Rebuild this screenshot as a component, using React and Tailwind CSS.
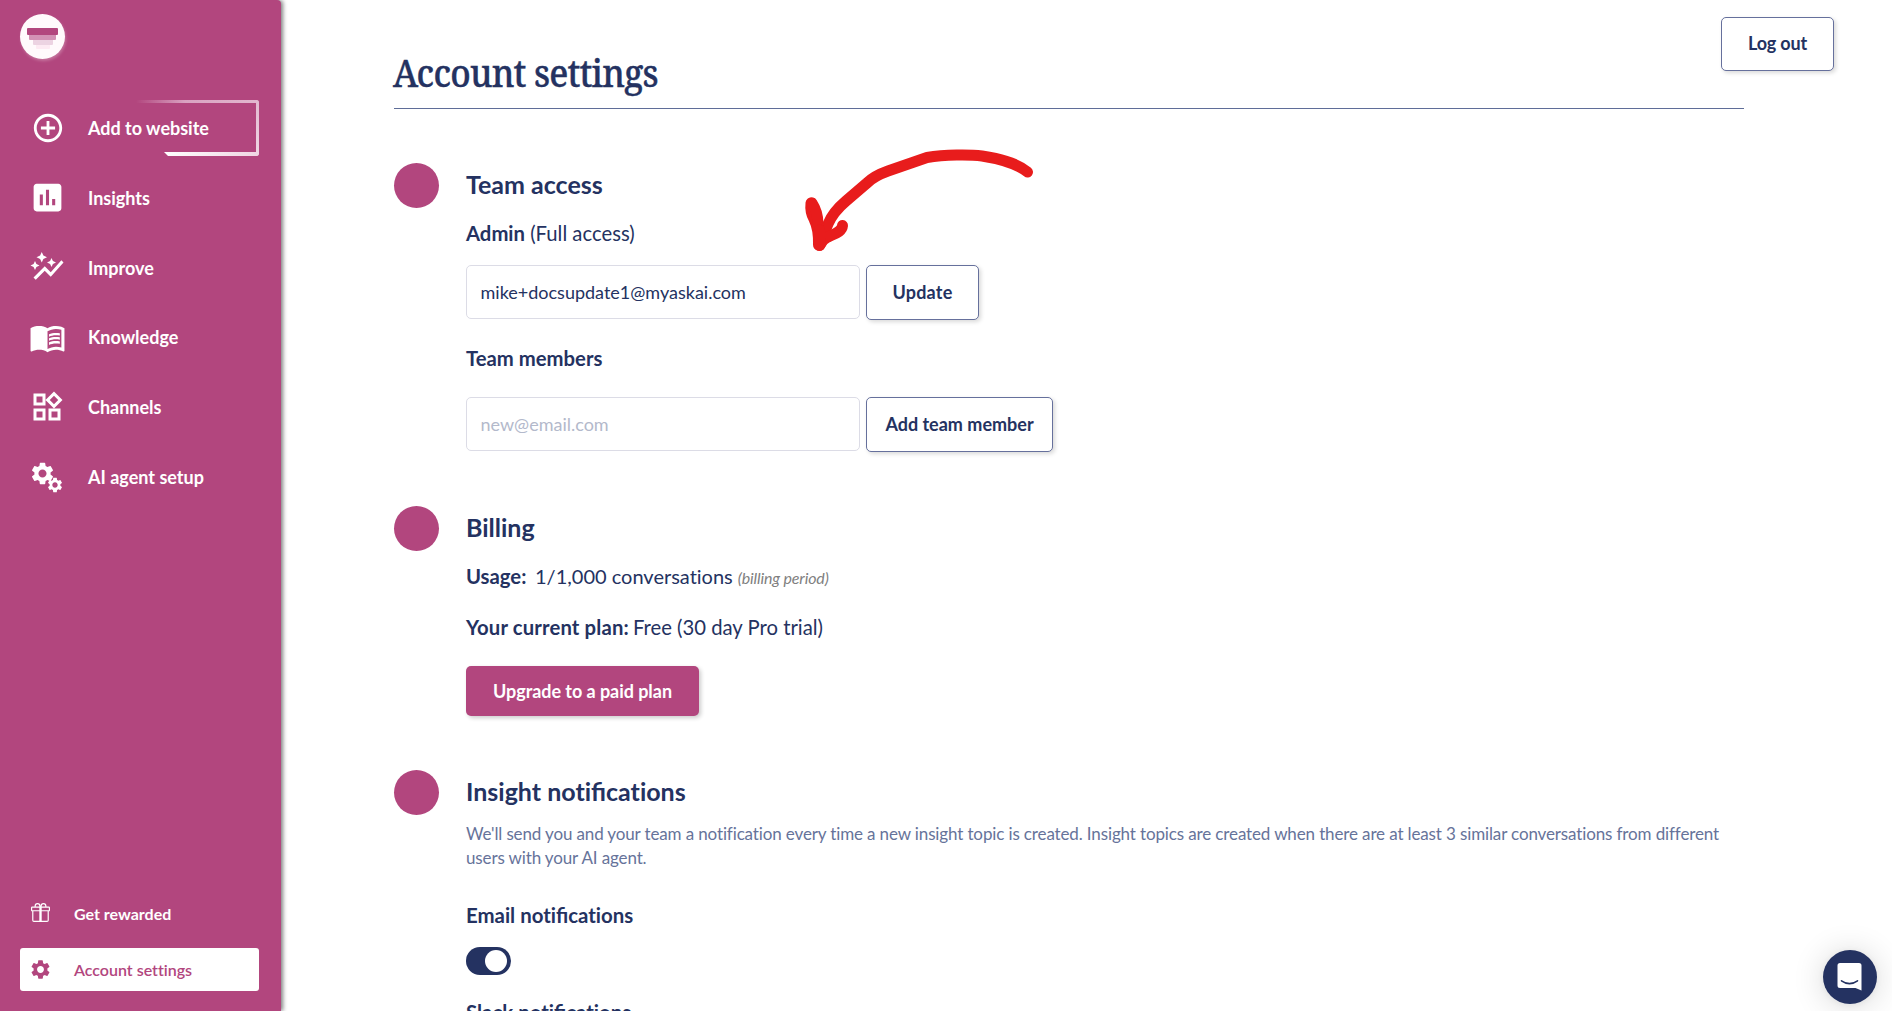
import React from "react";
import {
  MdAddCircleOutline,
  MdInsertChart,
  MdAutoGraph,
  MdMenuBook,
  MdOutlineWidgets,
  MdSettings,
} from "react-icons/md";
import { BsGift } from "react-icons/bs";

// Lato joins "ti" and "tt" by default; only the "fi" ligature is wanted here.
function Txt({ children }) {
  return children.split(/(fi)/).map((part, i) =>
    i % 2 ? (
      <span key={i} className="[font-variant-ligatures:common-ligatures]">
        {part}
      </span>
    ) : (
      part
    )
  );
}

function Cogs() {
  return (
    <span className="relative block h-[34px] w-[36px]">
      <MdSettings className="absolute left-0 top-0 size-[27px]" />
      <MdSettings className="absolute left-[17px] top-[16px] size-[18px]" />
    </span>
  );
}

const nav = [
  { label: "Add to website", icon: <MdAddCircleOutline className="size-[34px]" />, left: "pl-[11px]", framed: true },
  { label: "Insights", icon: <MdInsertChart className="size-[37px]" />, left: "pl-[8.5px]" },
  { label: "Improve", icon: <MdAutoGraph className="size-[36px] -translate-y-px" />, left: "pl-[9px]" },
  { label: "Knowledge", icon: <MdMenuBook className="size-[37px]" />, left: "pl-[8.5px]" },
  { label: "Channels", icon: <MdOutlineWidgets className="size-[36px]" />, left: "pl-[9px]" },
  { label: "AI agent setup", icon: <Cogs />, left: "pl-[9px]" },
];

function Frame() {
  return (
    <span className="pointer-events-none absolute inset-0">
      <span className="absolute right-0 top-0 h-[3px] w-[123px] rounded-tr-[3px] bg-linear-to-r from-[#e0b0cb]/0 via-[#d9a2c1] via-40% to-[#e2b7cf]" />
      <span className="absolute right-0 top-0 h-[56px] w-[3px] rounded-r-[3px] bg-linear-to-b from-[#e2b7cf] to-[#efd8e5]" />
      <span className="absolute bottom-0 right-0 h-[4px] w-[95px] rounded-br-[3px] bg-linear-to-r from-white to-[#efd5e3] [clip-path:polygon(0_0,100%_0,100%_100%,4px_100%)]" />
    </span>
  );
}

function Sidebar() {
  return (
    <aside className="relative z-10 flex w-[281px] shrink-0 flex-col rounded-tr-[4px] bg-[#b2467e] px-5 pb-5 pr-[22px] pt-[14px] text-white shadow-[2px_0_4px_rgba(0,0,0,0.5)]">
      <div className="flex size-[45px] flex-col items-center rounded-full bg-[#fffafc] pt-[14px] shadow-[1px_2px_3px_rgba(255,255,255,0.25)]">
        <div className="h-[7px] w-[31px] rounded-[1px] bg-[#b2467e]" />
        <div className="h-[5px] w-[27px] rounded-b-[1px] bg-[#d391b5]" />
        <div className="h-[5px] w-[20px] rounded-b-[1px] bg-[#ecd3e2]" />
        <div className="h-[4px] w-[14px] rounded-b-[1px] bg-[#fdeaf3]" />
      </div>
      <nav className="mt-[41px] flex flex-col gap-[13.8px]">
        {nav.map((n) => (
          <a key={n.label} className="relative flex h-[56px] w-[239px] items-center">
            {n.framed && <Frame />}
            <span className={"flex w-[68px] shrink-0 " + n.left}>{n.icon}</span>
            <span className="text-[18px] leading-[22px] font-bold">{n.label}</span>
          </a>
        ))}
      </nav>
      <div className="mt-auto">
        <a className="mb-[13px] flex h-[42px] items-center">
          <BsGift className="ml-[11px] mr-[24px] size-[19px] -translate-y-[2px]" />
          <span className="text-[16px] font-bold">Get rewarded</span>
        </a>
        <a className="flex h-[43px] w-[239px] items-center rounded-[3px] bg-white text-[#b2467e]">
          <MdSettings className="ml-[9px] mr-[22px] size-[23px]" />
          <span className="text-[16px] font-semibold">Account settings</span>
        </a>
      </div>
    </aside>
  );
}

function Section({ title, children, className = "" }) {
  return (
    <section className={"flex gap-[27px] " + className}>
      <div className="size-[45px] shrink-0 rounded-full bg-[#b2467e]" />
      <div className="min-w-0 flex-1">
        <h2 className="flex h-[44px] items-center text-[25px] font-bold whitespace-pre">
          <span><Txt>{title}</Txt></span>
        </h2>
        {children}
      </div>
    </section>
  );
}

const outlineBtn =
  "flex items-center justify-center rounded-[5px] border border-[#66709c] bg-white text-[18px] font-bold shadow-[2px_2px_4px_rgba(0,0,0,0.15)]";
const field =
  "h-[54px] w-[394px] rounded-[5px] border border-[#dcdce6] px-[13.5px] text-[18px] outline-none placeholder:text-[#b3b9cb]";

function Main() {
  return (
    <main className="relative flex-1 pl-[113px] pt-[52px] text-[#243261]">
      <button className={outlineBtn + " absolute right-[58px] top-[17px] h-[54px] w-[113px] pb-[2px] tracking-[-0.2px]"}>
        Log out
      </button>
      <div className="w-[1350px]">
        <h1 className="h-[40px] origin-left -translate-x-px scale-x-92 whitespace-nowrap font-['Noto_Serif',serif] text-[38px] leading-[40px] font-medium tracking-[-0.85px] [-webkit-text-stroke:0.4px_#243261]">
          Account settings
        </h1>
        <div className="mt-4 h-px bg-[#5f6d98]" />

        <Section title="Team access" className="mt-[54px]">
          <div className="mt-[14px] h-[24px] text-[20.3px] leading-[24px]">
            <b>Admin</b> (Full access)
          </div>
          <div className="mt-5 flex h-[55px] gap-[6px]">
            <input className={field} defaultValue="mike+docsupdate1@myaskai.com" />
            <button className={outlineBtn + " h-[55px] w-[113px] tracking-[0.2px]"}>Update</button>
          </div>
          <div className="mt-[26px] h-[24px] text-[20.3px] leading-[24px] font-bold">Team members</div>
          <div className="mt-[27px] flex h-[55px] gap-[6px]">
            <input className={field} placeholder="new@email.com" />
            <button className={outlineBtn + " h-[55px] w-[187px]"}>Add team member</button>
          </div>
        </Section>

        <Section title="Billing" className="mt-[54px]">
          <div className="mt-[14px] flex h-[24px] items-baseline text-[20.3px] leading-[24px]">
            <b className="w-[69px]">Usage:</b>
            <span className="mr-[5px] text-[20px]">1/1,000 conversations</span>
            <i className="text-[16px] tracking-[-0.15px] text-[#808080]">(billing period)</i>
          </div>
          <div className="mt-[27px] h-[24px] text-[20.3px] leading-[24px]">
            <b className="tracking-[0.15px]">Your current plan:</b>
            <span className="ml-1">Free (30 day Pro trial)</span>
          </div>
          <button className="mt-[27px] flex h-[50px] w-[233px] items-center justify-center rounded-[5px] bg-[#b2467e] text-[18px] font-bold tracking-[-0.05px] text-white shadow-[2px_2px_4px_rgba(0,0,0,0.2)]">
            Upgrade to a paid plan
          </button>
        </Section>

        <Section title="Insight notifications" className="mt-[54px]">
          <p className="mt-[8px] w-[1280px] text-[17px] leading-[24px] tracking-[-0.13px] text-[#66739a]">
            We'll send you and your team a notification every time a new insight topic is created. Insight topics
            are created when there are at least 3 similar conversations from different users with your AI agent.
          </p>
          <div className="mt-[33px] h-[24px] text-[20.4px] leading-[24px] font-bold">
            <Txt>Email notifications</Txt>
          </div>
          <div className="mt-[20px] flex h-[28px] w-[45px] items-center justify-end rounded-full bg-[#243261] pr-1">
            <div className="size-[22px] rounded-full bg-white" />
          </div>
          <div className="mt-[25px] h-[24px] text-[20.4px] leading-[24px] font-bold">
            <Txt>Slack notifications</Txt>
          </div>
        </Section>
      </div>
    </main>
  );
}

function Arrow() {
  return (
    <svg className="pointer-events-none absolute left-[780px] top-[130px] z-20" width="280" height="140" fill="none" stroke="#e81c1c" strokeWidth="11" strokeLinecap="round" strokeLinejoin="round">
      <path d="M247.500 42C235 32 218 28.500 202 26C190 24.500 165 24.500 147 27.500L108 41Q94 46 87 53L66 71Q53 82 48 94Q43 106 41 113" />
      <path d="M31 73Q30 82 34 89Q39 99 38.500 115M62.500 95.500C62 102 54 104 48 107Q43 109 40 115" />
      <path d="M32 73Q38 82 38 94L40 112" />
      <path d="M39.500 100V115.500" />
    </svg>
  );
}

function ChatLauncher() {
  return (
    <button className="absolute bottom-[7px] right-[15px] z-20 flex size-[54px] items-center justify-center rounded-full bg-[#243261] pr-[2px] pb-[1px] shadow-[0_1px_6px_rgba(0,0,0,0.06),0_2px_32px_rgba(0,0,0,0.16)]">
      <svg width="25" height="28" viewBox="0 0 25 28" fill="none">
        <path d="M3 0H22Q24.500 0 24.500 2.500V27.500L18.500 25H3Q.5 25 .5 22.500V2.500Q.5 0 3 0Z" fill="white" />
        <path d="M4.500 17.800Q12.500 23.500 20.500 17.800" stroke="#243261" strokeWidth="1.600" strokeLinecap="round" />
      </svg>
    </button>
  );
}

export default function App() {
  return (
    <div className="relative flex h-screen overflow-hidden bg-white font-['Lato',sans-serif] [font-variant-ligatures:none]">
      <Sidebar />
      <Main />
      <Arrow />
      <ChatLauncher />
    </div>
  );
}
